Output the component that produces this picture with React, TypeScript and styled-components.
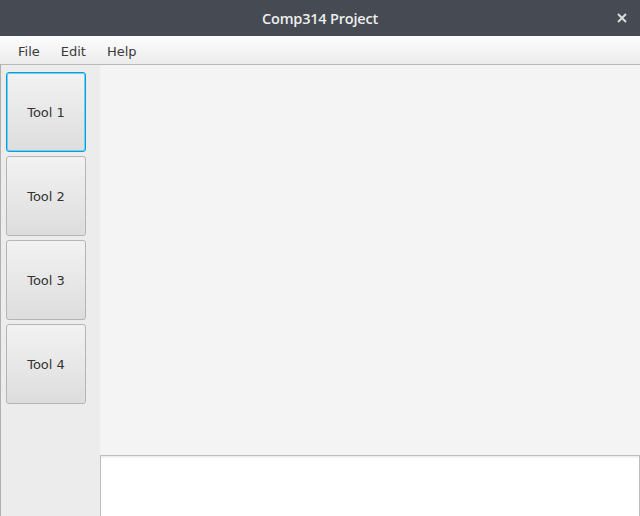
import React from 'react';
import styled, { createGlobalStyle } from 'styled-components';

const GlobalStyle = createGlobalStyle`
  html, body {
    margin: 0;
    padding: 0;
    overflow: hidden;
  }
  body {
    font-family: "DejaVu Sans", "Noto Sans", sans-serif;
  }
`;

const Window = styled.div`
  width: 640px;
  height: 516px;
  display: flex;
  flex-direction: column;
  background-color: #f4f4f4;
`;

const TitleBar = styled.div`
  height: 36px;
  flex: none;
  background-color: #454a53;
  display: flex;
  align-items: center;
  justify-content: center;
  position: relative;
`;

const Title = styled.span`
  color: #eeeeec;
  font-family: "Open Sans", "Noto Sans", sans-serif;
  font-weight: 600;
  font-size: 14.5px;
  letter-spacing: -0.2px;
`;

const CloseButton = styled.button`
  position: absolute;
  right: 11px;
  top: 11px;
  width: 14px;
  height: 14px;
  padding: 0;
  border: none;
  background: transparent;
  display: flex;
  align-items: center;
  justify-content: center;
`;

const MenuBar = styled.div`
  height: 29px;
  flex: none;
  background: linear-gradient(#fdfdfd, #ececec);
  border-bottom: 1px solid #b8b8b8;
  display: flex;
  align-items: center;
  padding: 2px 0 0 8px;
  box-sizing: border-box;
`;

const MenuItem = styled.span`
  font-size: 13px;
  color: #3a3a3a;
  padding: 0 10px;
  margin-right: 1px;
`;

const Body = styled.div`
  flex: 1;
  display: flex;
  min-height: 0;
`;

const Sidebar = styled.div`
  width: 100px;
  flex: none;
  background-color: #ececec;
  border-left: 1px solid #b0b0b0;
  display: flex;
  flex-direction: column;
  gap: 4px;
  padding: 7px 0 0 5px;
  box-sizing: border-box;
`;

const ToolButton = styled.button<{ $focused?: boolean }>`
  width: 80px;
  height: 80px;
  box-sizing: border-box;
  border-radius: 3px;
  border: 1px solid ${(p) => (p.$focused ? '#039ed3' : '#b5b5b5')};
  box-shadow: ${(p) => (p.$focused ? 'inset 0 0 0 1px #6fcff1' : 'none')};
  background: linear-gradient(#f2f2f2, #dddddd);
  font-family: "DejaVu Sans", "Noto Sans", sans-serif;
  font-size: 13px;
  color: #333;
  padding: 0;
`;

const Main = styled.div`
  flex: 1;
  display: flex;
  flex-direction: column;
  background-color: #f4f4f4;
`;

const Canvas = styled.div`
  flex: 1;
`;

const Output = styled.div`
  height: 61px;
  flex: none;
  background-color: #fff;
  border: 1px solid #bdbdbd;
  border-bottom: none;
  box-shadow: inset 0 3px 3px -2px #e4e4e4;
  box-sizing: border-box;
`;

export default function App() {
  return (
    <Window>
      <GlobalStyle />
      <TitleBar>
        <Title>Comp314 Project</Title>
        <CloseButton aria-label="close">
          <svg width="10" height="10" viewBox="0 0 10 10">
            <path d="M1 1 L9 9 M9 1 L1 9" stroke="#dcdcdc" strokeWidth="2" />
          </svg>
        </CloseButton>
      </TitleBar>
      <MenuBar>
        <MenuItem>File</MenuItem>
        <MenuItem>Edit</MenuItem>
        <MenuItem>Help</MenuItem>
      </MenuBar>
      <Body>
        <Sidebar>
          <ToolButton $focused>Tool 1</ToolButton>
          <ToolButton>Tool 2</ToolButton>
          <ToolButton>Tool 3</ToolButton>
          <ToolButton>Tool 4</ToolButton>
        </Sidebar>
        <Main>
          <Canvas />
          <Output />
        </Main>
      </Body>
    </Window>
  );
}
